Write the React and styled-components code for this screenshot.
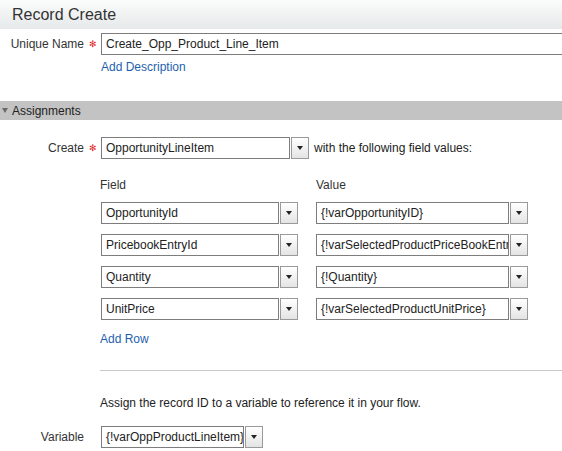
import React from "react";
import styled, { createGlobalStyle } from "styled-components";

const Global = createGlobalStyle`
  html, body { margin: 0; padding: 0; background: #fff; overflow: hidden; }
  body { font-family: "Liberation Sans", Arial, sans-serif; color: #222; font-size: 12px; }
`;

const Page = styled.div`
  width: 562px;
  height: 451px;
  overflow: hidden;
  position: relative;
`;

const Header = styled.div`
  height: 29px;
  display: flex;
  align-items: center;
  padding-left: 12px;
  font-size: 16px;
  color: #333;
  background: linear-gradient(#fbfcfc, #e6e9e9);
`;

const FormRow = styled.div`
  display: grid;
  grid-template-columns: 84px 17px auto 1fr;
  align-items: center;
  margin-top: ${(p) => p.$mt || 0}px;
  white-space: nowrap;
`;

const Label = styled.div`
  text-align: right;
  font-size: 12px;
  color: #333;
`;

const Req = styled.span`
  color: #d22;
  font-size: 9px;
  text-align: center;
  padding-left: 1px;
`;

const Box = styled.div`
  box-sizing: border-box;
  width: ${(p) => p.$w}px;
  height: 22px;
  border: 1px solid #7d7d7d;
  background: #fff;
  display: flex;
  align-items: center;
  padding-left: 4px;
  font-size: 12px;
  color: #222;
  overflow: hidden;
  white-space: nowrap;
`;

const Combo = styled.div`
  display: flex;
  align-items: center;
  gap: 1px;
`;

const DropBtn = styled.div`
  box-sizing: border-box;
  width: 18px;
  height: 22px;
  border: 1px solid #9a9a9a;
  background: linear-gradient(#ffffff, #e4e4e4);
  display: flex;
  align-items: center;
  justify-content: center;
  &::after {
    content: "";
    border-left: 3.5px solid transparent;
    border-right: 3.5px solid transparent;
    border-top: 4px solid #222;
  }
`;

const Link = styled.div`
  color: #1f5fad;
  font-size: 12px;
  padding-left: ${(p) => p.$pl || 0}px;
  margin-top: ${(p) => p.$mt || 0}px;
`;

const SectionBar = styled.div`
  margin-top: 27px;
  height: 19px;
  background: #c3c3c3;
  display: flex;
  align-items: center;
  gap: 4px;
  padding-left: 2px;
  font-size: 12px;
  color: #222;
  &::before {
    content: "";
    border-left: 3px solid transparent;
    border-right: 3px solid transparent;
    border-top: 5px solid #6a6a6a;
  }
`;

const After = styled.span`
  padding-left: 5px;
  font-size: 12px;
`;

const Table = styled.div`
  margin: 19px 0 0 100px;
  display: grid;
  grid-template-columns: 215px 220px;
  row-gap: 10px;
`;

const ColHead = styled.div`
  font-size: 12px;
  color: #333;
  padding-left: ${(p) => p.$pl || 0}px;
`;

const Cell = styled.div`
  padding-left: ${(p) => p.$pl || 0}px;
`;

const Divider = styled.div`
  margin: 24px 0 0 100px;
  border-top: 1px solid #c8c8c8;
`;

const Note = styled.div`
  margin: 25px 0 0 100px;
  font-size: 12px;
  color: #222;
`;

const rows = [
  ["OpportunityId", "{!varOpportunityID}"],
  ["PricebookEntryId", "{!varSelectedProductPriceBookEntryId}"],
  ["Quantity", "{!Quantity}"],
  ["UnitPrice", "{!varSelectedProductUnitPrice}"],
];

function Select({ w, children }) {
  return (
    <Combo>
      <Box $w={w}>{children}</Box>
      <DropBtn />
    </Combo>
  );
}

export default function App() {
  return (
    <Page>
      <Global />
      <Header>Record Create</Header>
      <FormRow $mt={4}>
        <Label>Unique Name</Label>
        <Req>✻</Req>
        <Box $w={480}>Create_Opp_Product_Line_Item</Box>
      </FormRow>
      <Link $pl={101} $mt={5}>Add Description</Link>
      <SectionBar>Assignments</SectionBar>
      <FormRow $mt={17}>
        <Label>Create</Label>
        <Req>✻</Req>
        <Select w={189}>OpportunityLineItem</Select>
        <After>with the following field values:</After>
      </FormRow>
      <Table>
        <ColHead>Field</ColHead>
        <ColHead $pl={1}>Value</ColHead>
        {rows.map(([f, v]) => (
          <React.Fragment key={f}>
            <Cell $pl={1}>
              <Select w={178}>{f}</Select>
            </Cell>
            <Cell $pl={1}>
              <Select w={193}>{v}</Select>
            </Cell>
          </React.Fragment>
        ))}
      </Table>
      <Link $pl={100} $mt={12}>Add Row</Link>
      <Divider />
      <Note>Assign the record ID to a variable to reference it in your flow.</Note>
      <FormRow $mt={16}>
        <Label>Variable</Label>
        <span />
        <Select w={143}>{"{!varOppProductLineItem}"}</Select>
      </FormRow>
    </Page>
  );
}
